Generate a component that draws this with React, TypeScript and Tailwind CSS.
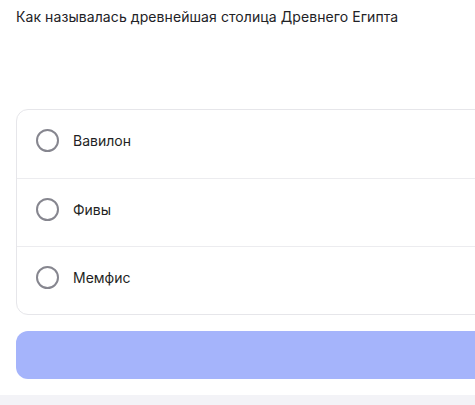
const options = ["Вавилон", "Фивы", "Мемфис"];

export default function App() {
  return (
    <div className="w-[475px] h-[405px] overflow-hidden bg-[#f3f3f7] font-['Inter',sans-serif]">
      <div className="w-[560px] h-[395px] bg-white px-4 pt-[7px]">
        <h1 className="text-[14px] leading-5 tracking-[0.08px] text-[#222226]">
          Как называлась древнейшая столица Древнего Египта
        </h1>
        <div className="mt-[82px] rounded-xl border border-[#e6e6ea] bg-white">
          {options.map((opt, i) => (
            <label
              key={opt}
              className={
                "flex h-[68px] items-start pt-[19px] px-[19px] cursor-pointer " +
                (i > 0 ? "border-t border-[#ececef]" : "")
              }
            >
              <span className="flex items-center gap-[14px]">
                <span className="h-[23px] w-[23px] rounded-full border-2 border-[#86868f]" />
                <span className="text-[14px] text-[#1f1f24]">{opt}</span>
              </span>
            </label>
          ))}
        </div>
        <button className="mt-4 h-[48px] w-full rounded-xl bg-[#a5b4fb]" />
      </div>
    </div>
  );
}
